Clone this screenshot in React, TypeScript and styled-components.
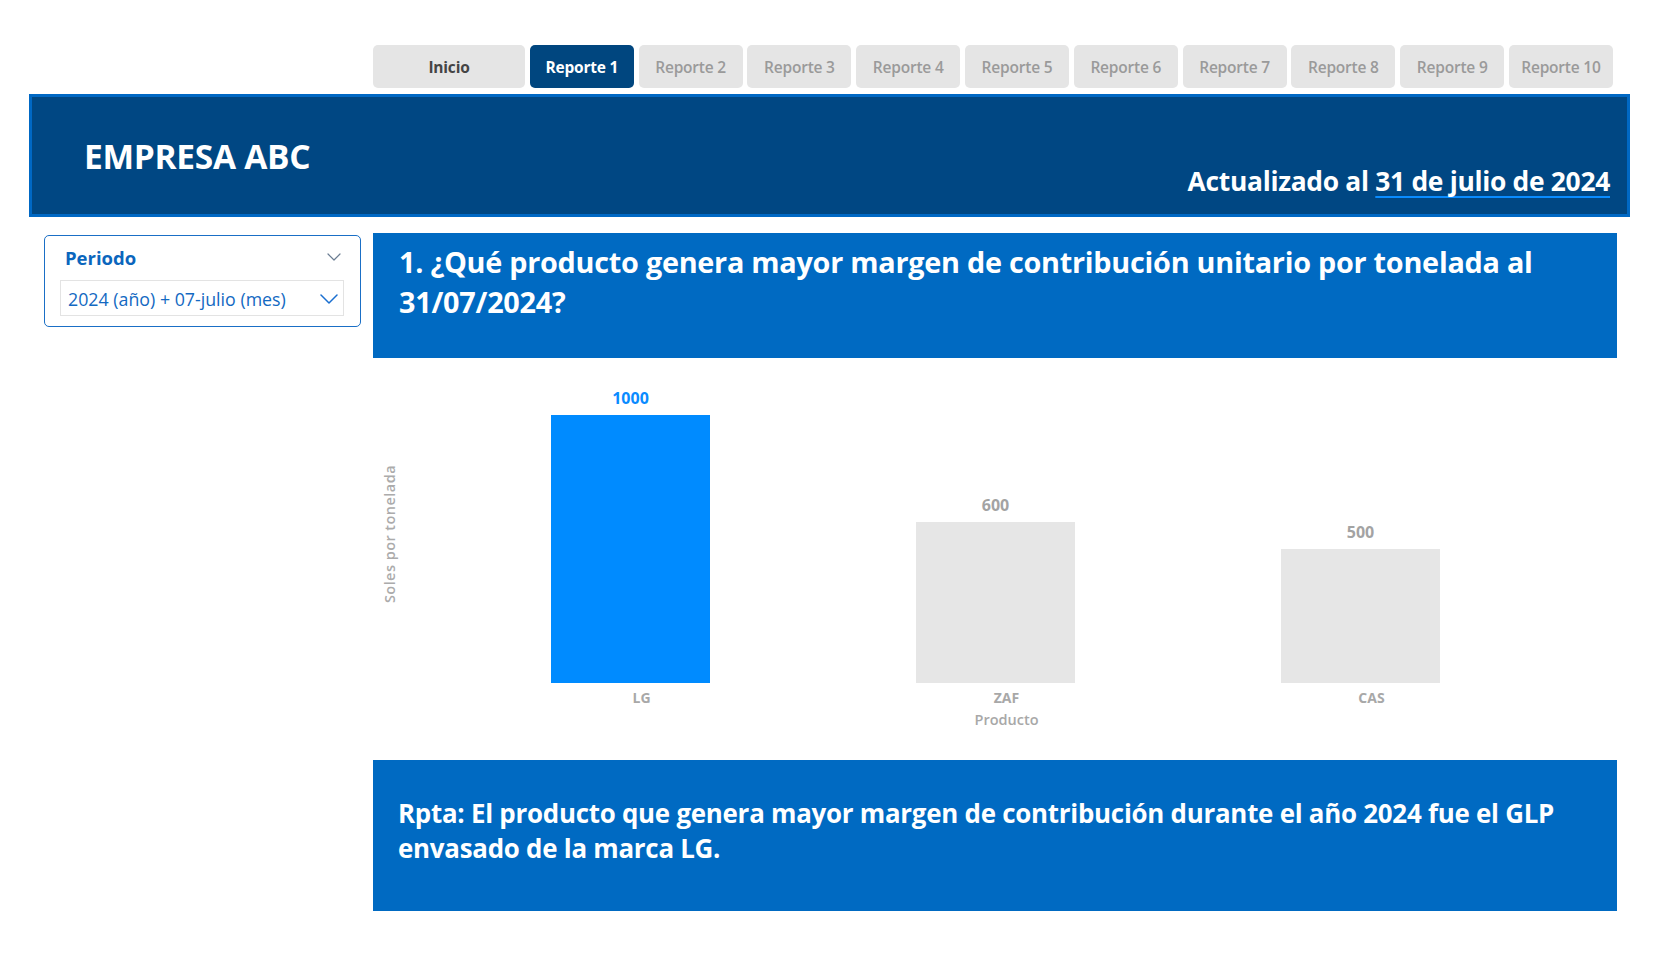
import React from "react";
import styled, { createGlobalStyle } from "styled-components";

const GlobalStyle = createGlobalStyle`
  html, body { margin: 0; padding: 0; background: #ffffff; }
  body { font-family: "Open Sans", "Noto Sans", "Liberation Sans", sans-serif; }
  * { box-sizing: border-box; }
`;

const Page = styled.div`
  width: 1659px;
  height: 960px;
  padding-top: 45px;
  background: #ffffff;
  overflow: hidden;
`;

const TabBar = styled.nav`
  display: flex;
  gap: 4.8px;
  margin-left: 373px;
`;

const Tab = styled.div<{ $active?: boolean; $home?: boolean }>`
  width: ${(p) => (p.$home ? "152px" : "104px")};
  height: 43px;
  border-radius: 5px;
  display: flex;
  align-items: center;
  justify-content: center;
  font-size: 15.5px;
  font-weight: ${(p) => (p.$active || p.$home ? 700 : 600)};
  letter-spacing: -0.2px;
  background: ${(p) => (p.$active ? "#00467f" : "#e5e5e5")};
  color: ${(p) => (p.$active ? "#ffffff" : p.$home ? "#444444" : "#9a9a9a")};
`;

const Header = styled.header`
  margin: 6px 0 0 29px;
  width: 1601px;
  height: 123px;
  background: #004783;
  border: 3px solid #0068c4;
  display: flex;
  justify-content: space-between;
  align-items: stretch;
  padding: 0 17px 0 52px;
`;

const Brand = styled.h1`
  margin: 0;
  align-self: center;
  color: #ffffff;
  font-size: 33.5px;
  font-weight: 700;
  letter-spacing: -0.3px;
  line-height: 40px;
`;

const Updated = styled.div`
  align-self: flex-end;
  padding-bottom: 15px;
  color: #ffffff;
  font-size: 26.4px;
  font-weight: 700;
  line-height: 35px;
  letter-spacing: -0.3px;
`;

const DateMark = styled.span`
  text-decoration: underline;
  text-decoration-color: #0a8cff;
  text-decoration-thickness: 2px;
  text-underline-offset: 5px;
  text-decoration-skip-ink: none;
`;

const Body = styled.div`
  display: flex;
  margin-top: 16px;
`;

const Sidebar = styled.aside`
  margin-left: 44px;
  width: 317px;
  padding-top: 2px;
`;

const Slicer = styled.div`
  height: 92px;
  border: 1px solid #1a6fc6;
  border-radius: 5px;
  padding: 9px 16px 10px 15px;
  display: flex;
  flex-direction: column;
  gap: 11px;
`;

const SlicerHead = styled.div`
  height: 24px;
  display: flex;
  align-items: center;
  justify-content: space-between;
  padding: 0 3px 0 5px;
  color: #0b66bd;
  font-size: 18.5px;
  font-weight: 700;
`;

const Dropdown = styled.div`
  height: 36px;
  border: 1px solid #e3e3e3;
  display: flex;
  align-items: center;
  justify-content: space-between;
  padding: 2px 5px 0 7px;
  color: #1369c2;
  font-size: 17.8px;
  font-weight: 400;
`;

const Main = styled.main`
  margin-left: 12px;
  width: 1244px;
  display: flex;
  flex-direction: column;
`;

const Banner = styled.section<{ $h: number; $pt: number; $fs: number; $lh: number; $pl: number }>`
  height: ${(p) => p.$h}px;
  background: #006ac2;
  color: #ffffff;
  padding: ${(p) => p.$pt}px 40px 0 ${(p) => p.$pl}px;
  font-size: ${(p) => p.$fs}px;
  line-height: ${(p) => p.$lh}px;
  font-weight: 700;
  letter-spacing: -0.25px;
`;

const Chart = styled.div`
  height: 402px;
  display: grid;
  grid-template-columns: 75px repeat(3, 365px);
  grid-template-rows: 325px auto auto;
  align-content: start;
`;

const AxisTitle = styled.div`
  grid-row: 1;
  grid-column: 1;
  align-self: end;
  justify-self: start;
  margin: 0 0 80px 8px;
  writing-mode: vertical-rl;
  transform: rotate(180deg);
  color: #ababab;
  font-size: 14.5px;
  line-height: 18px;
  letter-spacing: 0.45px;
  font-weight: 600;
`;

const BarCol = styled.div`
  grid-row: 1;
  display: flex;
  flex-direction: column;
  justify-content: flex-end;
  align-items: center;
`;

const ValueLabel = styled.div<{ $hi?: boolean }>`
  height: 20px;
  line-height: 20px;
  margin-bottom: 7px;
  font-size: 16px;
  font-weight: 700;
  color: ${(p) => (p.$hi ? "#0a8bff" : "#a3a3a3")};
`;

const Bar = styled.div<{ $hi?: boolean }>`
  width: 159px;
  background: ${(p) => (p.$hi ? "#008bff" : "#e6e6e6")};
`;

const CatLabel = styled.div`
  grid-row: 2;
  margin-top: 6px;
  padding-left: 22px;
  text-align: center;
  line-height: 18px;
  font-size: 14px;
  font-weight: 700;
  color: #a8a8a8;
`;

const AxisName = styled.div`
  grid-row: 3;
  grid-column: 2 / 5;
  margin-top: 4px;
  padding-left: 22px;
  text-align: center;
  line-height: 18px;
  font-size: 14.5px;
  font-weight: 600;
  color: #a8a8a8;
`;

const Chevron = ({ w, h, color, sw }: { w: number; h: number; color: string; sw: number }) => (
  <svg width={w} height={h} viewBox={`0 0 ${w} ${h}`} fill="none">
    <polyline
      points={`1,1 ${w / 2},${h - 1} ${w - 1},1`}
      stroke={color}
      strokeWidth={sw}
      strokeLinecap="round"
      strokeLinejoin="round"
    />
  </svg>
);

const tabs = ["Reporte 1", "Reporte 2", "Reporte 3", "Reporte 4", "Reporte 5", "Reporte 6", "Reporte 7", "Reporte 8", "Reporte 9", "Reporte 10"];

const data = [
  { name: "LG", value: 1000, hi: true },
  { name: "ZAF", value: 600, hi: false },
  { name: "CAS", value: 500, hi: false },
];

export default function App() {
  return (
    <>
      <GlobalStyle />
      <Page>
        <TabBar>
          <Tab $home>Inicio</Tab>
          {tabs.map((t, i) => (
            <Tab key={t} $active={i === 0}>
              {t}
            </Tab>
          ))}
        </TabBar>
        <Header>
          <Brand>EMPRESA ABC</Brand>
          <Updated>
            Actualizado al <DateMark>31 de julio de 2024</DateMark>
          </Updated>
        </Header>
        <Body>
          <Sidebar>
            <Slicer>
              <SlicerHead>
                <span>Periodo</span>
                <Chevron w={14} h={8} color="#6b7d92" sw={1.2} />
              </SlicerHead>
              <Dropdown>
                <span>2024 (año) + 07-julio (mes)</span>
                <Chevron w={18} h={10} color="#1a6fd0" sw={1.5} />
              </Dropdown>
            </Slicer>
          </Sidebar>
          <Main>
            <Banner $h={125} $pt={9} $fs={28.8} $lh={40} $pl={26}>
              1. ¿Qué producto genera mayor margen de contribución unitario por tonelada al 31/07/2024?
            </Banner>
            <Chart>
              <AxisTitle>Soles por tonelada</AxisTitle>
              {data.map((d, i) => (
                <BarCol key={d.name} style={{ gridColumn: i + 2 }}>
                  <ValueLabel $hi={d.hi}>{d.value}</ValueLabel>
                  <Bar $hi={d.hi} style={{ height: `${d.value * 0.268}px` }} />
                </BarCol>
              ))}
              {data.map((d, i) => (
                <CatLabel key={d.name} style={{ gridColumn: i + 2 }}>
                  {d.name}
                </CatLabel>
              ))}
              <AxisName>Producto</AxisName>
            </Chart>
            <Banner $h={151} $pt={36} $fs={25.9} $lh={35} $pl={25}>
              Rpta: El producto que genera mayor margen de contribución durante el año 2024 fue el GLP envasado de la marca LG.
            </Banner>
          </Main>
        </Body>
      </Page>
    </>
  );
}
